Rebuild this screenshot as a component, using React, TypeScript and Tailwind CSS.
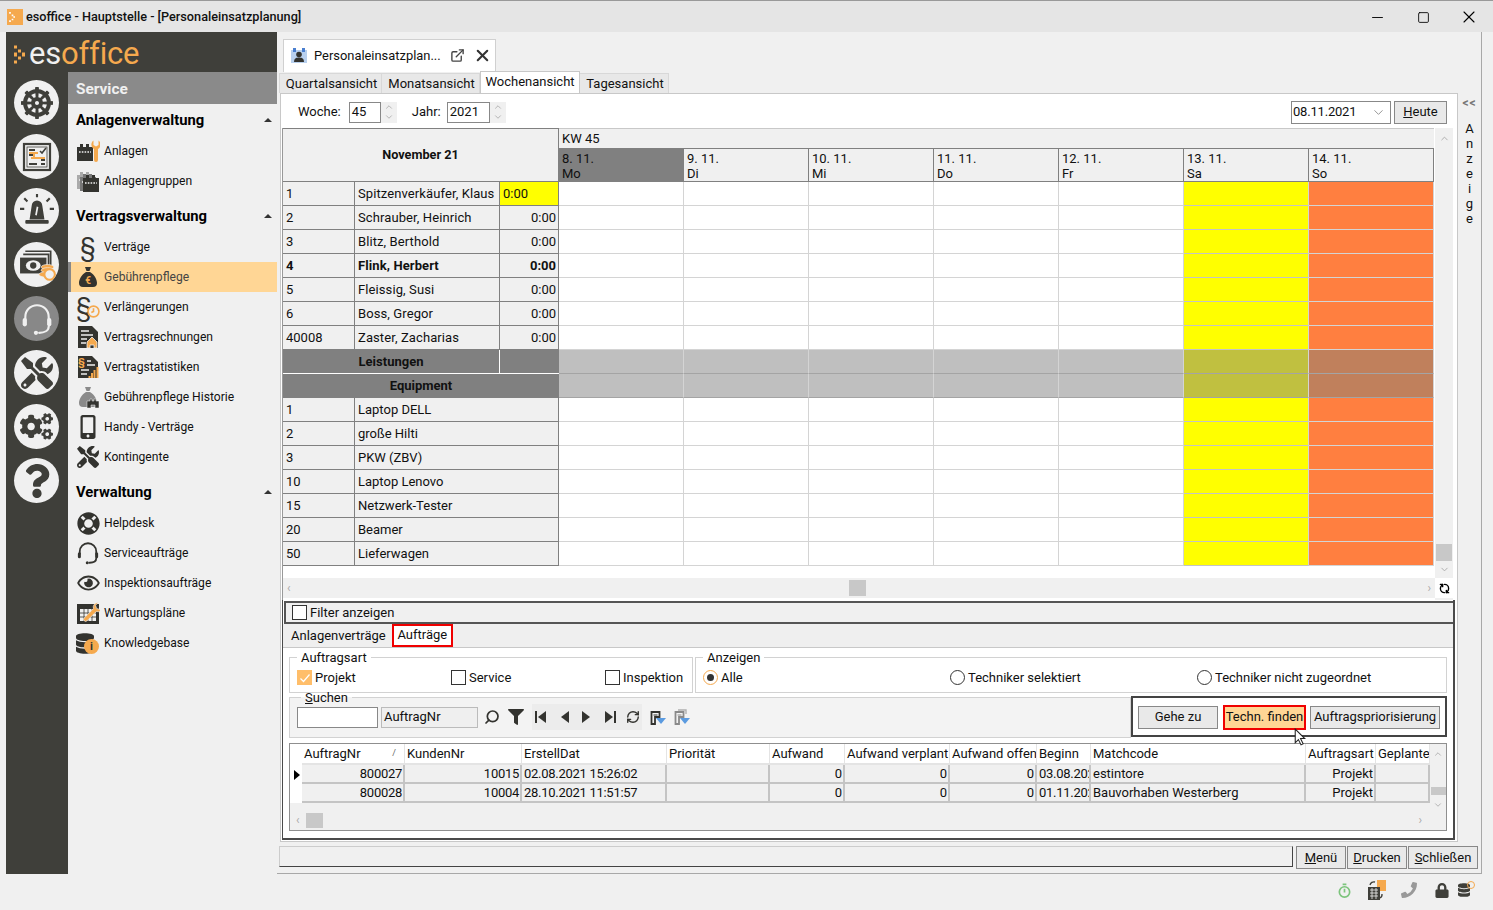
import type { ReactNode } from 'react';
import {
  FaCogs,
  FaDatabase,
  FaDharmachakra,
  FaFilter,
  FaLifeRing,
  FaLock,
  FaMobileAlt,
  FaPhoneAlt,
  FaQuestion,
  FaRegEye,
  FaTools,
} from 'react-icons/fa';
import { ChevronDown, ChevronUp, ExternalLink, Minus, Square, X, Search, RefreshCw } from 'lucide-react';

const DARK = '#3f3f3a';
const ORANGE = '#f5a94e';
const INK = '#33332f';

function Headset({ className, strokeWidth = 2.4 }: { className?: string; strokeWidth?: number }) {
  return (
    <svg viewBox="0 0 32 32" className={className} fill="none" stroke="currentColor" strokeWidth={strokeWidth} strokeLinecap="round">
      <path d="M5 17 V14 a11 11 0 0 1 22 0 V17" />
      <rect x="2.500" y="15" width="4" height="8" rx="2" fill="currentColor" stroke="none" />
      <rect x="25.500" y="15" width="4" height="8" rx="2" fill="currentColor" stroke="none" />
      <path d="M27 23 c0 4-4 6-9 6" />
      <circle cx="15" cy="29" r="2" fill="currentColor" stroke="none" />
    </svg>
  );
}

function Board() {
  return (
    <svg viewBox="0 0 32 32" className="h-[32px] w-[32px]">
      <rect x="3" y="3" width="26" height="26" fill="none" stroke={DARK} strokeWidth="2.200" />
      <rect x="6" y="6" width="20" height="20" fill="none" stroke={DARK} strokeWidth="0.800" />
      <path d="M8 9h6M8 14h5M20 19h4M8 23h8M20 23h4" stroke={DARK} strokeWidth="1.800" />
      <path d="M8 12h9M13 12v5M10 17h14" stroke={ORANGE} strokeWidth="2" fill="none" />
      <path d="M19 10l2 2 4-5" stroke={DARK} strokeWidth="1.600" fill="none" />
    </svg>
  );
}

function Siren() {
  return (
    <svg viewBox="0 0 32 32" className="h-[34px] w-[34px]" fill={DARK}>
      <path d="M9 24 L11 11 a5 5 0 0 1 10 0 L23 24z" />
      <rect x="5" y="24.500" width="22" height="3.500" rx="1" />
      <path d="M16.500 12 l-1.500 8" stroke="#f0f0f0" strokeWidth="1.600" />
      <path d="M0 14h4M28 14h4M4 4l3 3M28 4l-3 3M16 0v3" stroke={DARK} strokeWidth="2" />
    </svg>
  );
}

function MoneyStack() {
  return (
    <svg viewBox="0 0 36 32" className="ml-[2px] h-[34px] w-[38px]">
      <path d="M6 3 h24 v15 M4 6 h24 v15" fill="none" stroke={DARK} strokeWidth="1.600" />
      <rect x="1" y="9" width="25" height="15" fill={DARK} />
      <ellipse cx="13.500" cy="16.500" rx="7" ry="5" fill="#f0f0f0" />
      <circle cx="13.500" cy="16.500" r="3" fill={DARK} />
      <ellipse cx="27" cy="18" rx="6" ry="2.500" fill={ORANGE} stroke="#f0f0f0" strokeWidth="0.600" />
      <ellipse cx="27" cy="21" rx="6" ry="2.500" fill={ORANGE} stroke="#f0f0f0" strokeWidth="0.600" />
      <ellipse cx="25" cy="25" rx="6" ry="2.500" fill={ORANGE} stroke="#f0f0f0" strokeWidth="0.600" />
      <circle cx="29" cy="25" r="5" fill="#f0f0f0" stroke={ORANGE} strokeWidth="2" />
    </svg>
  );
}

function Factory({ color = INK, x = 0, y = 0 }: { color?: string; x?: number; y?: number }) {
  return (
    <g transform={`translate(${x} ${y})`}>
      <path d="M1 22 V8 h3 V5 h3 v3 h3 V5 h3 v3 h4 v14z" fill={color} />
      <path d="M3 13h12" stroke="#f0f0f0" strokeWidth="1.600" strokeDasharray="1.600 1.200" />
    </g>
  );
}

const Box = ({ children }: { children: ReactNode }) => (
  <svg viewBox="0 0 24 24" className="h-[24px] w-[24px] shrink-0">
    {children}
  </svg>
);

const WRENCH = 'M17.500 1.500 V6 L20 7.500 22.500 6 V1.500 A5 5 0 0 1 22 10 V21 a2 2 0 0 1-4 0 V10 A5 5 0 0 1 17.500 1.500z';
const BAG = 'M9 2 h6 l-1.500 4 h-3z M10 7 h4 C19 10 21 15 21 18 a4 4 0 0 1-4 4 H7 a4 4 0 0 1-4-4 c0-3 2-8 7-11z';

const AnlagenIcon = () => (
  <Box>
    <Factory />
    <path d={WRENCH} fill={ORANGE} />
  </Box>
);
const GruppenIcon = () => (
  <Box>
    <Factory color="#aaaaaa" x={0} y={-2} />
    <Factory color="#777777" x={3} y={0} />
    <Factory x={6} y={1} />
  </Box>
);
const BagIcon = () => (
  <Box>
    <path d={BAG} fill={INK} />
    <text x="12" y="19" textAnchor="middle" fontSize="10" fontWeight="700" fill={ORANGE} fontFamily="Roboto, sans-serif">€</text>
  </Box>
);
const HistoryIcon = () => (
  <Box>
    <path d={BAG} fill="#8a8a8a" />
    <path d="M11 23 v-7 h3 v-2 h2 v2 h2 v-2 h2 v2 h3 v7 h-4 v-3 h-4 v3z" fill={INK} stroke="#f0f0f0" strokeWidth="0.500" />
  </Box>
);
const ParagraphIcon = ({ badge }: { badge?: boolean }) => (
  <span className="relative flex h-[24px] w-[24px] shrink-0 items-center justify-center text-[25px] leading-none text-[#33332f]">
    <span className={badge ? '-ml-[8px]' : ''}>§</span>
    {badge && (
      <svg viewBox="0 0 12 12" className="absolute right-0 bottom-[1px] h-[13px] w-[13px]" fill="#f0f0f0" stroke={ORANGE} strokeWidth="1.500">
        <circle cx="6" cy="6" r="5" />
        <path d="M6 3v3l-2 1" fill="none" />
      </svg>
    )}
  </span>
);
const InvoiceIcon = () => (
  <Box>
    <path d="M2 1 h14 l6 6 v16 H2z" fill={INK} />
    <path d="M5 6h8M5 10h12M5 14h6M5 18h5" stroke="#f0f0f0" strokeWidth="1.500" />
    <path d="M11 23 v-6 l5-5 5 5 v6 h-3 v-3 h-4 v3z" fill={ORANGE} stroke="#f0f0f0" strokeWidth="0.800" />
  </Box>
);
const StatsIcon = () => (
  <Box>
    <path d="M2 1 h14 l6 6 v16 H2z" fill={INK} />
    <path d="M11 6h4M11 10h8M5 15h8M5 19h6" stroke="#f0f0f0" strokeWidth="1.500" />
    <text x="5.500" y="11" textAnchor="middle" fontSize="11" fontWeight="700" fill={ORANGE} fontFamily="Roboto, sans-serif">§</text>
    <path d="M13.500 23v-2M16 23v-5M18.500 23v-8M21.500 23v-11" stroke={ORANGE} strokeWidth="2" />
  </Box>
);
const PlanIcon = () => (
  <Box>
    <path d="M1 3 h22 v20 H1z" fill={INK} />
    <path d="M4 8h16v12H4z" fill="#f0f0f0" />
    <path d="M8 8v12M12 8v12M16 8v12M4 12h16M4 16h16" stroke={INK} strokeWidth="0.800" />
    <g transform="rotate(45 16 12)">
      <path d="M13 0 V4 L16 5.500 19 4 V0 A5 5 0 0 1 18 8 V21 a2 2 0 0 1-4 0 V8 A5 5 0 0 1 13 0z" fill={ORANGE} stroke="#f0f0f0" strokeWidth="0.600" />
    </g>
  </Box>
);
const KnowledgeIcon = () => (
  <span className="relative flex h-[24px] w-[24px] shrink-0 items-center text-[#33332f]">
    <FaDatabase className="h-[23px] w-[18px]" />
    <span className="absolute right-[1px] bottom-[1px] flex h-[15px] w-[15px] items-center justify-center rounded-full bg-[#f5a94e] text-[11px] leading-none font-bold text-[#33332f]">i</span>
  </span>
);
const Center = ({ children }: { children: ReactNode }) => (
  <span className="flex h-[24px] w-[24px] shrink-0 items-center justify-center text-[#33332f]">{children}</span>
);

const sections: { title: string; items: { label: string; icon: ReactNode; active?: boolean }[] }[] = [
  {
    title: 'Anlagenverwaltung',
    items: [
      { label: 'Anlagen', icon: <AnlagenIcon /> },
      { label: 'Anlagengruppen', icon: <GruppenIcon /> },
    ],
  },
  {
    title: 'Vertragsverwaltung',
    items: [
      { label: 'Verträge', icon: <ParagraphIcon /> },
      { label: 'Gebührenpflege', icon: <BagIcon />, active: true },
      { label: 'Verlängerungen', icon: <ParagraphIcon badge /> },
      { label: 'Vertragsrechnungen', icon: <InvoiceIcon /> },
      { label: 'Vertragstatistiken', icon: <StatsIcon /> },
      { label: 'Gebührenpflege Historie', icon: <HistoryIcon /> },
      { label: 'Handy - Verträge', icon: <Center><FaMobileAlt className="h-[24px] w-[18px]" /></Center> },
      { label: 'Kontingente', icon: <Center><FaTools className="h-[22px] w-[22px]" /></Center> },
    ],
  },
  {
    title: 'Verwaltung',
    items: [
      { label: 'Helpdesk', icon: <Center><FaLifeRing className="h-[23px] w-[23px]" /></Center> },
      { label: 'Serviceaufträge', icon: <Center><Headset className="h-[24px] w-[24px]" /></Center> },
      { label: 'Inspektionsaufträge', icon: <Center><FaRegEye className="h-[20px] w-[23px]" /></Center> },
      { label: 'Wartungspläne', icon: <PlanIcon /> },
      { label: 'Knowledgebase', icon: <KnowledgeIcon /> },
    ],
  },
];

const railIcons: { node: ReactNode; active?: boolean }[] = [
  { node: <FaDharmachakra className="h-[32px] w-[32px] text-[#3f3f3a]" /> },
  { node: <Board /> },
  { node: <Siren /> },
  { node: <MoneyStack /> },
  { node: <Headset className="h-[34px] w-[34px] text-[#f0f0f0]" strokeWidth={2} />, active: true },
  { node: <FaTools className="h-[32px] w-[32px] text-[#3f3f3a]" /> },
  { node: <FaCogs className="h-[31px] w-[33px] text-[#3f3f3a]" /> },
  { node: <FaQuestion className="h-[34px] w-[34px] text-[#3f3f3a]" /> },
];

function Sidebar() {
  return (
    <aside className="flex w-[271px] shrink-0 flex-col bg-[#3f3f3a]">
      <div className="flex h-[40px] items-center pl-[8px]">
        <svg viewBox="0 0 14 18" className="mt-[5px] h-[19px] w-[14px]" fill={ORANGE}>
          <path d="M0 0h3v3H0zM4 4h3v3H4zM8 7h3v4H8zM4 11h3v3H4zM0 15h3v3H0zM0 7h3v4H0z" />
        </svg>
        <span className="mt-[2px] ml-[1px] text-[31px] leading-none tracking-[-0.2px] text-[#f0f0f0]">
          es<span className="text-[#f5a94e]">office</span>
        </span>
      </div>
      <div className="flex flex-1">
        <div className="flex w-[62px] flex-col gap-[9px] pt-[8px] pl-[8px]">
          {railIcons.map((r, i) => (
            <div
              key={i}
              className={`flex h-[45px] w-[45px] items-center justify-center overflow-hidden rounded-full ${r.active ? 'bg-[#888888]' : 'bg-[#f0f0f0]'}`}
            >
              {r.node}
            </div>
          ))}
        </div>
        <div className="flex-1 bg-[#f0f0f0]">
          <div className="flex h-[32px] items-center bg-[#8a8a8a] pt-[3px] pl-[8px] text-[15.400px] font-bold text-[#f0f0f0]">Service</div>
          {sections.map((s) => (
            <div key={s.title} className="mb-[4px]">
              <div className="relative flex h-[32px] items-center pl-[8px] text-[14.800px] font-bold text-black">
                {s.title}
                <span className="absolute top-[14px] right-[5px] h-0 w-0 border-x-[4px] border-b-[4px] border-x-transparent border-b-[#333]" />
              </div>
              {s.items.map((it) => (
                <div
                  key={it.label}
                  className={`flex h-[30px] items-center gap-[4px] text-[12.100px] ${it.active ? 'border-l-[3px] border-[#888] bg-[#ffd695] pl-[5px] text-[#444]' : 'pl-[8px] text-[#111]'}`}
                >
                  {it.icon}
                  <span>{it.label}</span>
                </div>
              ))}
            </div>
          ))}
        </div>
      </div>
    </aside>
  );
}

const people = [
  ['1', 'Spitzenverkäufer, Klaus', '0:00'],
  ['2', 'Schrauber, Heinrich', '0:00'],
  ['3', 'Blitz, Berthold', '0:00'],
  ['4', 'Flink, Herbert', '0:00'],
  ['5', 'Fleissig, Susi', '0:00'],
  ['6', 'Boss, Gregor', '0:00'],
  ['40008', 'Zaster, Zacharias', '0:00'],
];
const equipment = [
  ['1', 'Laptop DELL'],
  ['2', 'große Hilti'],
  ['3', 'PKW (ZBV)'],
  ['10', 'Laptop Lenovo'],
  ['15', 'Netzwerk-Tester'],
  ['20', 'Beamer'],
  ['50', 'Lieferwagen'],
];
const days = [
  ['8. 11.', 'Mo'],
  ['9. 11.', 'Di'],
  ['10. 11.', 'Mi'],
  ['11. 11.', 'Do'],
  ['12. 11.', 'Fr'],
  ['13. 11.', 'Sa'],
  ['14. 11.', 'So'],
];

function DayCells({ shaded }: { shaded?: boolean }) {
  return (
    <div className="flex">
      {days.map((d, i) => {
        let bg = shaded ? 'bg-[#bfbfbf] border-b-[#a4a4a4]' : 'bg-white border-b-[#d4d4d4]';
        if (i === 5) bg = shaded ? 'bg-[#c0c040] border-b-[#a4a4a4]' : 'bg-[#ffff00] border-b-[#c4c4c4]';
        if (i === 6) bg = shaded ? 'bg-[#c0805c] border-b-[#a4a4a4]' : 'bg-[#ff7f40] border-b-[#d4d4d4]';
        return <div key={d[0]} className={`h-[24px] w-[125px] border-r border-b border-r-[#d4d4d4] ${bg}`} />;
      })}
    </div>
  );
}

function WeekGrid() {
  return (
    <div className="mr-[2px] ml-[1px] flex h-[472px] border-l border-[#999]">
      <div className="flex w-[1152px] flex-col">
        <div className="flex h-[54px]">
          <div className="flex w-[276px] items-center justify-center border-t border-r border-b border-[#808080] bg-[#f0f0f0] text-[12.700px] font-bold">
            November 21
          </div>
          <div className="flex flex-col">
            <div className="flex h-[20px] items-center border-t border-[#c8c8c8] bg-[#f0f0f0] pl-[3px]">KW 45</div>
            <div className="flex h-[34px]">
              {days.map((d, i) => (
                <div
                  key={d[0]}
                  className={`w-[125px] border-t border-r border-b border-[#808080] pt-[2px] pl-[3px] leading-[15px] ${i === 0 ? 'bg-[#808080]' : 'bg-[#f0f0f0]'}`}
                >
                  <div>{d[0]}</div>
                  <div>{d[1]}</div>
                </div>
              ))}
            </div>
          </div>
        </div>
        {people.map((p, idx) => (
          <div key={p[0]} className={`flex h-[24px] ${idx === 3 ? 'font-bold' : ''}`}>
            <div className="flex w-[72px] items-center border-r border-b border-[#808080] bg-[#f0f0f0] pl-[3px]">{p[0]}</div>
            <div className="flex w-[145px] items-center border-r border-b border-[#808080] bg-[#f0f0f0] pl-[3px] tracking-[0.1px] whitespace-nowrap">{p[1]}</div>
            <div className={`flex w-[59px] items-center border-r border-b border-[#808080] px-[2px] ${idx === 0 ? 'bg-[#ffff00] pl-[3px]' : 'justify-end bg-[#f0f0f0]'}`}>{p[2]}</div>
            <DayCells />
          </div>
        ))}
        <div className="flex h-[24px]">
          <div className="flex w-[217px] items-center justify-center border-r border-b border-white bg-[#808080] font-bold text-[#111]">Leistungen</div>
          <div className="w-[59px] border-b border-white bg-[#808080]" />
          <DayCells shaded />
        </div>
        <div className="flex h-[24px]">
          <div className="flex w-[276px] items-center justify-center border-b border-[#808080] bg-[#808080] font-bold text-[#111]">Equipment</div>
          <DayCells shaded />
        </div>
        {equipment.map((e) => (
          <div key={e[0]} className="flex h-[24px]">
            <div className="flex w-[72px] items-center border-r border-b border-[#808080] bg-[#f0f0f0] pl-[3px]">{e[0]}</div>
            <div className="flex w-[204px] items-center border-r border-b border-[#808080] bg-[#f0f0f0] pl-[3px]">{e[1]}</div>
            <DayCells />
          </div>
        ))}
        <div className="h-[12px] bg-white" />
        <div className="relative flex h-[20px] items-center justify-between bg-[#f0f0f0] px-[4px] text-[#aaa]">
          <span className="text-[12px]">‹</span>
          <span className="absolute top-[2px] left-[566px] h-[16px] w-[17px] bg-[#c8c8c8]" />
          <span className="text-[12px]">›</span>
        </div>
      </div>
      <div className="flex w-[18px] flex-col bg-[#f0f0f0]">
        <div className="flex h-[450px] flex-col items-center justify-between">
          <ChevronUp className="mt-[5px] h-[11px] w-[11px] text-[#aaa]" />
          <div className="flex flex-col items-center">
            <div className="h-[17px] w-[16px] bg-[#c8c8c8]" />
            <ChevronDown className="my-[3px] h-[11px] w-[11px] text-[#aaa]" />
          </div>
        </div>
        <div className="flex h-[20px] items-center justify-center bg-white">
          <RefreshCw className="h-[11px] w-[11px] rotate-90 text-black" strokeWidth={3} />
        </div>
      </div>
    </div>
  );
}

function Check({ label, checked, className }: { label: string; checked?: boolean; className?: string }) {
  return (
    <div className={`flex items-center gap-[3px] ${className ?? ''}`}>
      <span className={`flex h-[15px] w-[15px] items-center justify-center border ${checked ? 'border-[#ffbe6a] bg-[#ffbe6a]' : 'border-[#333] bg-white'}`}>
        {checked && (
          <svg viewBox="0 0 12 12" className="h-[12px] w-[12px]" fill="none" stroke="#fff" strokeWidth="1.200">
            <path d="M1.500 6.500l3 3 6-7" />
          </svg>
        )}
      </span>
      {label}
    </div>
  );
}

function Radio({ label, checked, className }: { label: string; checked?: boolean; className?: string }) {
  return (
    <div className={`flex items-center gap-[3px] ${className ?? ''}`}>
      <span className={`flex h-[15px] w-[15px] items-center justify-center rounded-full border ${checked ? 'border-[#f5a94e]' : 'border-[#333]'} bg-white`}>
        {checked && <span className="h-[7px] w-[7px] rounded-full bg-[#333]" />}
      </span>
      {label}
    </div>
  );
}

function TriIcon({ dir, bar }: { dir: 'l' | 'r'; bar?: boolean }) {
  return (
    <svg viewBox="0 0 14 14" className="h-[14px] w-[14px]" fill={INK}>
      {dir === 'l' ? <path d="M12 1 v12 L4 7z" /> : <path d="M2 1 v12 L10 7z" />}
      {bar && (dir === 'l' ? <rect x="1" y="1" width="2" height="12" /> : <rect x="11" y="1" width="2" height="12" />)}
    </svg>
  );
}

function FilterBuilding({ muted }: { muted?: boolean }) {
  const c = muted ? '#8a8a8a' : INK;
  return (
    <svg viewBox="0 0 16 16" className="h-[16px] w-[16px]">
      {muted && <path d="M4 1 h8 v4 M2 3 h8" fill="none" stroke="#b0b0b0" strokeWidth="1.400" />}
      <path d="M1.500 15 V3 h8 v5 H5 v7z" fill="none" stroke={c} strokeWidth="1.800" />
      <path d="M3.500 6h4" stroke={c} strokeWidth="1" />
      <path d="M6 9 h10 l-5 6z" fill="#5b9be0" />
    </svg>
  );
}

const orderCols: [string, number][] = [
  ['AuftragNr', 103],
  ['KundenNr', 117],
  ['ErstellDat', 145],
  ['Priorität', 103],
  ['Aufwand', 75],
  ['Aufwand verplant', 105],
  ['Aufwand offen', 87],
  ['Beginn', 54],
  ['Matchcode', 215],
  ['Auftragsart', 70],
  ['Geplante', 54],
];
const orderRows = [
  ['800027', '10015', '02.08.2021 15:26:02', '', '0', '0', '0', '03.08.2021', 'estintore', 'Projekt', ''],
  ['800028', '10004', '28.10.2021 11:51:57', '', '0', '0', '0', '01.11.2021', 'Bauvorhaben Westerberg', 'Projekt', ''],
];
const rightAligned = [0, 1, 4, 5, 6, 9];
const digitCols = [0, 1, 2, 7];

function OrdersTable() {
  return (
    <div className="mx-[6px] mt-[6px] flex h-[88px] border border-[#8f8f8f] bg-[#f0f0f0]">
      <div className="flex w-[1140px] flex-col">
        <div className="flex h-[21px] bg-white">
          <div className="w-[12px]" />
          {orderCols.map(([name, w]) => (
            <div key={name} className="relative flex items-center overflow-hidden border-r border-b-2 border-[#e4e4e4] pl-[2px] whitespace-nowrap" style={{ width: w }}>
              {name}
              {name === 'AuftragNr' && <span className="absolute right-[8px] text-[9px] text-[#666]">/</span>}
            </div>
          ))}
        </div>
        {orderRows.map((r, ri) => (
          <div key={r[0]} className="flex h-[19px]">
            <div className="flex w-[12px] items-center bg-white pl-[4px]">
              {ri === 0 && <span className="h-0 w-0 border-y-[5px] border-l-[6px] border-y-transparent border-l-black" />}
            </div>
            {r.map((c, i) => (
              <div
                key={i}
                className={`flex items-center overflow-hidden border-r-2 border-b-2 border-[#c4c4c4] whitespace-nowrap ${rightAligned.includes(i) ? 'justify-end pr-[1px] pl-[2px]' : 'px-[2px]'} ${digitCols.includes(i) ? 'tracking-[-0.280px]' : ''}`}
                style={{ width: orderCols[i][1] }}
              >
                {c}
              </div>
            ))}
          </div>
        ))}
        <div className="flex-1" />
        <div className="mb-[1px] flex h-[18px] items-center justify-between pr-[8px] pl-[6px] text-[12px] text-[#aaa]">
          <span className="flex items-center gap-[6px]">‹<span className="h-[15px] w-[17px] bg-[#c8c8c8]" /></span>
          <span>›</span>
        </div>
      </div>
      <div className="flex w-[17px] flex-col items-center pt-[5px]">
        <ChevronUp className="h-[10px] w-[10px] text-[#aaa]" />
        <div className="mt-[28px] h-[8px] w-[15px] bg-[#c8c8c8]" />
        <ChevronDown className="mt-[5px] h-[10px] w-[10px] text-[#aaa]" />
      </div>
    </div>
  );
}

function BottomPanel() {
  return (
    <div className="mr-[2px] ml-[1px] flex h-[240px] flex-col border-r-2 border-b-2 border-l border-[#4a4a4a] bg-white">
      <div className="mt-[1px] ml-[1px] flex h-[23px] items-center border-y-2 border-l-2 border-[#555] bg-[#f0f0f0] pl-[6px]">
        <Check label="Filter anzeigen" />
      </div>
      <div className="flex h-[24px] items-stretch border-b border-[#c8c8c8] bg-[#efefef] pl-[2px]">
        <div className="flex items-center px-[6px] pt-[1px]">Anlagenverträge</div>
        <div className="flex w-[61px] items-center justify-center border-2 border-[#f00000] bg-white pb-[1px]">Aufträge</div>
      </div>
      <div className="flex h-[48px] gap-[2px] px-[6px] pt-[2px]">
        <fieldset className="h-[43px] w-[404px] border border-[#d2d2d2]">
          <legend className="ml-[7px] px-[4px] leading-[15px]">Auftragsart</legend>
          <div className="mt-[3px] flex items-center pl-[7px]">
            <Check label="Projekt" checked className="w-[154px]" />
            <Check label="Service" className="w-[154px]" />
            <Check label="Inspektion" />
          </div>
        </fieldset>
        <fieldset className="h-[43px] flex-1 border border-[#d2d2d2]">
          <legend className="ml-[7px] px-[4px] leading-[15px]">Anzeigen</legend>
          <div className="mt-[3px] flex items-center pl-[7px]">
            <Radio label="Alle" checked className="w-[247px]" />
            <Radio label="Techniker selektiert" className="w-[247px]" />
            <Radio label="Techniker nicht zugeordnet" />
          </div>
        </fieldset>
      </div>
      <div className="flex h-[41px] items-start px-[6px]">
        <fieldset className="-mt-[6px] h-[48px] w-[842px] shrink-0 border border-[#d2d2d2] bg-[#f3f3f3]">
          <legend className="ml-[11px] px-[4px] leading-[15px]"><span className="underline">S</span>uchen</legend>
          <div className="-mt-[1px] flex items-center pl-[7px]">
            <div className="h-[21px] w-[81px] border border-[#888] bg-white" />
            <div className="ml-[3px] flex h-[21px] w-[97px] items-center border border-[#bbb] bg-[#efefef] pl-[2px]">AuftragNr</div>
            <div className="ml-[6px] flex items-center">
              <Search className="h-[16px] w-[16px] -scale-x-100 text-[#33332f]" strokeWidth={2.6} />
              <FaFilter className="ml-[8px] h-[16px] w-[16px] text-[#33332f]" />
              <span className="ml-[8px] flex h-[26px] items-center gap-[9px] bg-[#ececec] px-[2px]">
                <TriIcon dir="l" bar />
                <TriIcon dir="l" />
                <TriIcon dir="r" />
                <TriIcon dir="r" bar />
                <RefreshCw className="h-[14px] w-[14px] text-[#33332f]" strokeWidth={2.4} />
              </span>
              <span className="ml-[8px] flex items-center gap-[8px]">
                <FilterBuilding />
                <FilterBuilding muted />
              </span>
            </div>
          </div>
        </fieldset>
        <div className="relative flex h-[41px] flex-1 items-center border-2 border-[#444] bg-white pt-[1px] pl-[5px]">
          <button className="h-[23px] w-[80px] shrink-0 border border-[#888] bg-[#e9e9e9]">Gehe zu</button>
          <button className="ml-[5px] h-[25px] w-[83px] shrink-0 border-[2px] border-[#f00000] bg-[#ffd695] whitespace-nowrap">Techn. finden</button>
          <button className="ml-[4px] h-[23px] w-[130px] shrink-0 border border-[#888] bg-[#e9e9e9] whitespace-nowrap">Auftragspriorisierung</button>
          <svg viewBox="0 0 12 18" className="absolute top-[30px] left-[161px] h-[19px] w-[13px]" fill="#fff" stroke="#222" strokeWidth="1">
            <path d="M1 1 v13 l3-3 2.500 5 2-1 -2.500-5 h4z" />
          </svg>
        </div>
      </div>
      <OrdersTable />
    </div>
  );
}

function Spinner() {
  return (
    <span className="flex h-[21px] w-[16px] flex-col items-center justify-center bg-[#f0f0f0] text-[#aaa]">
      <ChevronUp className="h-[10px] w-[10px]" />
      <ChevronDown className="h-[10px] w-[10px]" />
    </span>
  );
}

function Main() {
  return (
    <main className="flex w-[1205px] flex-col border-r border-b border-[#a8a8a8] pl-[1px]">
      <div className="flex h-[40px] items-start pt-[7px] pl-[5px]">
        <div className="flex h-[33px] w-[213px] items-center border border-b-0 border-[#d0d0d0] bg-white pb-[1px] pl-[7px]">
          <svg viewBox="0 0 16 16" className="h-[16px] w-[16px]">
            <rect x="0" y="2" width="16" height="13" fill="#b8d0ee" />
            <rect x="2" y="0" width="3" height="4" fill="#4a7fd0" />
            <rect x="11" y="0" width="3" height="4" fill="#4a7fd0" />
            <circle cx="8" cy="6.500" r="2.800" fill={INK} />
            <path d="M3 14 c0-4 3-4.500 5-4.500 s5 .5 5 4.500z" fill={INK} />
          </svg>
          <span className="ml-[7px] text-[12.900px] whitespace-nowrap">Personaleinsatzplan...</span>
          <ExternalLink className="ml-[9px] h-[15px] w-[15px] text-[#444]" strokeWidth={2.2} />
          <X className="ml-[8px] h-[19px] w-[19px] text-[#333]" strokeWidth={2.6} />
        </div>
      </div>
      <div className="flex h-[21px] items-end pl-[1px]">
        <div className="flex h-[20px] w-[103px] items-center justify-center border border-b-0 border-[#d8d8d8] bg-[#e8e8e8] pt-[1px] pl-[2px]">Quartalsansicht</div>
        <div className="flex h-[20px] w-[98px] items-center justify-center border border-b-0 border-l-0 border-[#d8d8d8] bg-[#e8e8e8] pt-[1px] pl-[2px]">Monatsansicht</div>
        <div className="flex h-[22px] w-[100px] items-center justify-center border border-b-0 border-[#c8c8c8] bg-white pb-[2px]">Wochenansicht</div>
        <div className="flex h-[20px] w-[89px] items-center justify-center border border-b-0 border-l-0 border-[#d8d8d8] bg-[#e8e8e8] pt-[1px] pl-[2px]">Tagesansicht</div>
      </div>
      <div className="flex flex-1">
        <div className="ml-[2px] h-[749px] w-[1178px] shrink-0 border border-[#c8c8c8] bg-white">
          <div className="flex h-[34px] items-center pt-[2px] pl-[17px]">
            <span>Woche:</span>
            <span className="ml-[8px] flex h-[21px] w-[32px] items-center border border-[#888] pl-[2px]">45</span>
            <Spinner />
            <span className="ml-[15px]">Jahr:</span>
            <span className="ml-[6px] flex h-[21px] w-[43px] items-center border border-[#888] pl-[2px]">2021</span>
            <Spinner />
            <span className="ml-auto flex h-[23px] w-[100px] items-center justify-between border border-[#888] pr-[4px] pl-[1px] tracking-[-0.200px]">
              08.11.2021
              <ChevronDown className="h-[15px] w-[15px] text-[#888]" strokeWidth={1.4} />
            </span>
            <span className="mr-[10px] ml-[3px] flex h-[23px] w-[53px] items-center justify-center border border-[#888] bg-[#e9e9e9]">
              <span><span className="underline">H</span>eute</span>
            </span>
          </div>
          <WeekGrid />
          <BottomPanel />
        </div>
        <div className="flex w-[23px] flex-col items-center pt-[3px] leading-[15px]">
          <span className="mb-[11px] text-[12px] leading-[14px] font-bold tracking-[1px] text-[#777]">&lt;&lt;</span>
          {'Anzeige'.split('').map((c, i) => (
            <span key={i}>{c}</span>
          ))}
        </div>
      </div>
      <div className="flex h-[30px] items-start pt-[3px] pr-[3px] pl-[1px]">
        <div className="h-[21px] w-[1014px] shrink-0 border border-t-[#ccc] border-r-[#444] border-b-[#444] border-l-[#ccc]" />
        <button className="ml-[3px] h-[23px] w-[50px] shrink-0 border border-[#888] bg-[#e9e9e9]"><span className="underline">M</span>enü</button>
        <button className="ml-[1px] h-[23px] w-[60px] shrink-0 border border-[#888] bg-[#e9e9e9]"><span className="underline">D</span>rucken</button>
        <button className="ml-[1px] h-[23px] w-[70px] shrink-0 border border-[#888] bg-[#e9e9e9]"><span className="underline">S</span>chließen</button>
      </div>
    </main>
  );
}

function StatusBar() {
  return (
    <footer className="flex h-[36px] items-center justify-end pr-[23px] pb-[4px] text-[#3f3f3a]">
      <svg viewBox="0 0 16 16" className="h-[15px] w-[15px]" fill="none" stroke="#7cc47c" strokeWidth="1.800">
        <circle cx="8" cy="9.500" r="5.500" />
        <path d="M8 6v4M6 1.500h4" />
      </svg>
      <svg viewBox="0 0 20 20" className="ml-[15px] h-[20px] w-[20px]">
        <rect x="10" y="0" width="9" height="11" fill={ORANGE} />
        <rect x="1" y="7" width="12" height="13" fill={DARK} />
        <path d="M3 10h8M3 13h8M3 16h8M5 8v11M9 8v11" stroke="#f0f0f0" strokeWidth="0.800" />
        <path d="M15 14 a4 4 0 0 1-2 4M3 5 a4 4 0 0 1 5-3" stroke={DARK} strokeWidth="1.300" fill="none" />
      </svg>
      <FaPhoneAlt className="ml-[14px] h-[16px] w-[16px] -scale-x-100 text-[#999]" />
      <FaLock className="ml-[18px] h-[15px] w-[14px]" />
      <span className="relative ml-[9px] flex">
        <FaDatabase className="h-[16px] w-[12px]" />
        <span className="absolute -top-[1px] -right-[5px] h-[8px] w-[8px] rounded-full border border-[#f5a94e]" />
      </span>
    </footer>
  );
}

export default function App() {
  return (
    <div className="flex h-[910px] w-[1493px] flex-col overflow-hidden bg-[#f0f0f0] font-['Roboto',sans-serif] text-[13px] text-[#111]">
      <header className="flex h-[32px] items-center border-t border-[#999] bg-[#e5e5e5] pt-[1px]">
        <span className="ml-[7px] flex h-[16px] w-[16px] items-center bg-[#f5a94e] pl-[2px]">
          <svg viewBox="0 0 8 12" className="h-[10px] w-[7px]" fill="#fff">
            <path d="M0 0h2v2H0zM3 3h2v2H3zM5 5h2v2H5zM3 8h2v2H3zM0 10h2v2H0z" />
          </svg>
        </span>
        <span className="ml-[3px] text-[12.700px] font-medium">esoffice - Hauptstelle - [Personaleinsatzplanung]</span>
        <div className="ml-auto flex items-center pr-[1px] text-black">
          <span className="flex w-[46px] justify-center"><Minus className="h-[17px] w-[17px]" strokeWidth={1.300} /></span>
          <span className="flex w-[46px] justify-center"><Square className="h-[13px] w-[13px]" strokeWidth={1.600} /></span>
          <span className="flex w-[46px] justify-center"><X className="h-[20px] w-[20px]" strokeWidth={1.300} /></span>
        </div>
      </header>
      <div className="flex h-[842px] pl-[6px]">
        <Sidebar />
        <Main />
      </div>
      <StatusBar />
    </div>
  );
}
